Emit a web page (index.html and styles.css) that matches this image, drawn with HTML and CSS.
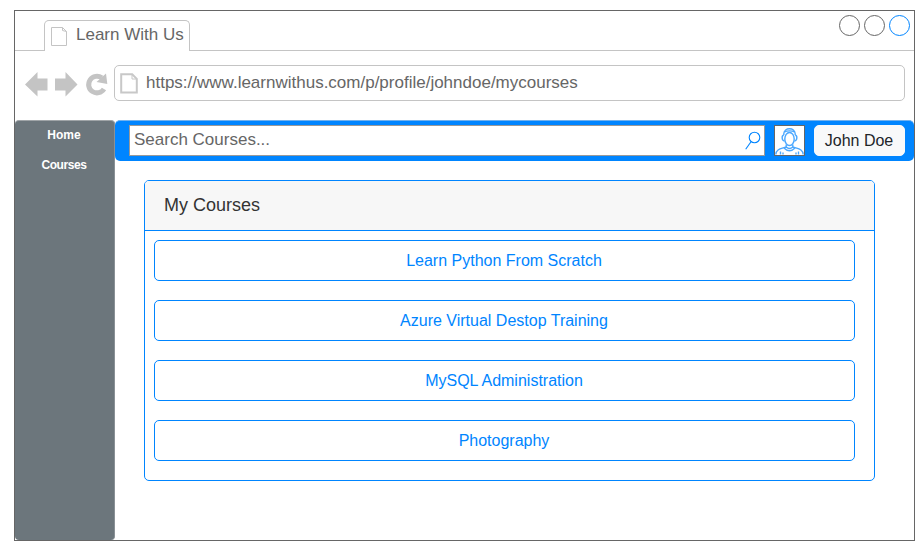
FILE: index.html
```html
<!DOCTYPE html>
<html lang="en">
<head>
<meta charset="utf-8">
<title>Learn With Us</title>
<link rel="stylesheet" href="styles.css">
</head>
<body>
<div class="window">
  <header class="tabs">
    <div class="tab">
      <svg class="tab-icon" width="17" height="20" viewBox="0 0 17 20"><path d="M.5 .5H11.5L15.5 4.5V18.5H.5ZM11.5 .5V3.5L15.5 4.5"/></svg>
      <span>Learn With Us</span>
    </div>
    <div class="controls"><i></i><i></i><i class="active"></i></div>
  </header>
  <div class="toolbar">
    <svg class="nav-icons" width="84" height="26" viewBox="0 0 84 26">
      <path d="M0 12.500L12.500 0V6.500H22.500V18.500H12.500V24.500Z"/>
      <path d="M52.500 12.500L40.500 0V6.500H30V18.500H40.500V24.500Z"/>
      <path class="reload" d="M79 17A8.300 8.300 0 1 1 76.800 5.800"/>
      <path d="M81 1.500L82.300 12L71.500 10Z"/>
    </svg>
    <div class="address">
      <svg class="page-icon" width="18" height="21" viewBox="0 0 18 21"><path d="M1.200 1.200H12.200L16.800 5.800V19.500H1.200Z"/><path class="fold" d="M12 1.500V6H16.500"/></svg>
      <span>https://www.learnwithus.com/p/profile/johndoe/mycourses</span>
    </div>
  </div>
  <div class="page">
    <nav class="sidebar">
      <a>Home</a>
      <a class="tight">Courses</a>
    </nav>
    <div class="content">
      <div class="navbar">
        <div class="search">
          <span>Search Courses...</span>
          <svg width="16" height="19" viewBox="0 0 16 19"><circle cx="9.5" cy="6.500" r="5.300"/><path d="M6 10.700L.7 18.300"/></svg>
        </div>
        <svg class="avatar" width="31" height="31" viewBox="0 0 31 31">
          <rect class="frame" x=".5" y=".5" width="30" height="30"/>
          <ellipse cx="15.500" cy="14" rx="4.700" ry="6.500"/>
          <path d="M9.800 10V8.800C10 2 21 2 21.200 8.800V10M10 7.200Q15.500 4.500 21 7.200M9.800 10C7.500 10.500 7.500 15.500 10.500 16M21.200 10C23.500 10.500 23.500 15.500 20.500 16M12.200 19.500V22Q15.500 25 18.800 22V19.500M12 22C7 23.800 2 24 1.800 29.500M19 22C24 23.800 29 24 29.200 29.500M10 23Q15.500 28.500 21 23M6.500 26.500V29.500M9 27.500V29.500M22 27.500V29.500M24.500 26.500V29.500"/>
        </svg>
        <button class="user">John Doe</button>
      </div>
      <section class="card">
        <h1>My Courses</h1>
        <div class="courses">
          <a>Learn Python From Scratch</a>
          <a>Azure Virtual Destop Training</a>
          <a>MySQL Administration</a>
          <a>Photography</a>
        </div>
      </section>
    </div>
  </div>
</div>
</body>
</html>
```
FILE: styles.css
```css
* { box-sizing: border-box; }
body {
  margin: 0;
  padding: 10px 0 0 14px;
  background: #fff;
  font-family: "Liberation Sans", Arial, sans-serif;
  overflow: hidden;
}
svg { display: block; flex: none; fill: none; }
.window {
  display: flex;
  flex-direction: column;
  width: 901px;
  height: 531px;
  border: 1px solid #666;
}
.tabs {
  display: flex;
  justify-content: space-between;
  height: 40px;
  flex: none;
  border-bottom: 1px solid #c4c4c4;
}
.tab {
  display: flex;
  width: 146px;
  height: 31px;
  margin: 9px 0 0 29px;
  padding: 6px 0 0 6px;
  gap: 8px;
  border: 1px solid #c4c4c4;
  border-bottom: 0;
  border-radius: 5px 5px 0 0;
  background: #fff;
  color: #666;
  font-size: 17px;
  line-height: 20px;
  white-space: nowrap;
}
.tab span { margin-top: -2px; }
.tab-icon { stroke: #c4c4c4; }
.controls { display: flex; gap: 4px; padding: 4px 4px 0 0; }
.controls i {
  width: 21px;
  height: 21px;
  border: 1px solid #666;
  border-radius: 50%;
}
.controls .active { border-color: #0085ff; }
.toolbar {
  display: flex;
  height: 69px;
  flex: none;
  padding: 14px 9px 0 10px;
}
.nav-icons { margin: 7px 5px 0 0; fill: #c4c4c4; }
.nav-icons .reload { fill: none; stroke: #c4c4c4; stroke-width: 5; }
.address {
  display: flex;
  flex: 1;
  height: 36px;
  padding: 7px 5px 0;
  gap: 8px;
  border: 1px solid #c4c4c4;
  border-radius: 5px;
  color: #666;
  font-size: 17px;
  line-height: 20px;
}
.page-icon { stroke: #c8c8c8; stroke-width: 2; }
.page-icon .fold { stroke-width: 1; }
.page { display: flex; flex: 1; }
.sidebar {
  width: 100px;
  padding-top: 5px;
  border-top: 1px solid #a0a5a8;
  border-right: 1px solid #8a9196;
  border-radius: 4px;
  background: #6c767c;
  text-align: center;
}
.sidebar a {
  display: block;
  height: 30px;
  color: #fff;
  font-size: 12px;
  font-weight: bold;
  line-height: 18px;
}
.sidebar a { padding-right: 1px; }
.sidebar .tight { letter-spacing: -0.4px; }
.content { flex: 1; }
.navbar {
  display: flex;
  height: 41px;
  padding: 4px 9px 0 14px;
  border-top: 1px solid #73b2ee;
  border-radius: 5px;
  background: #0085ff;
}
.search {
  display: flex;
  justify-content: space-between;
  width: 636px;
  height: 31px;
  padding: 5px 3px 0 4px;
  border: 1px solid #999;
  background: #fff;
  color: #666;
  font-size: 17px;
  line-height: 20px;
}
.search span { margin-top: -1px; }
.search svg { stroke: #0085ff; stroke-width: 1.1; }
.avatar { margin: 0 9px; stroke: #4aa7ff; stroke-width: 1.4; }
.avatar .frame { fill: #fff; stroke: #666; stroke-width: 1; }
.user {
  width: 91px;
  height: 31px;
  padding: 0 1px 0 0;
  border: 1px solid #f8f9fa;
  border-radius: 5px;
  background: #f8f9fa;
  color: #212529;
  font: 16px/28px "Liberation Sans", Arial, sans-serif;
}
.card {
  width: 731px;
  height: 301px;
  margin: 19px 0 0 29px;
  border: 1px solid #0085ff;
  border-radius: 5px;
  overflow: hidden;
}
.card h1 {
  height: 50px;
  margin: 0;
  padding-left: 19px;
  border-bottom: 1px solid #0085ff;
  background: #f7f7f7;
  color: #333;
  font-size: 18px;
  font-weight: normal;
  line-height: 48px;
}
.courses { display: grid; gap: 19px; padding: 9px 19px 0 9px; }
.courses a {
  height: 41px;
  padding-right: 1px;
  border: 1px solid #0085ff;
  border-radius: 5px;
  color: #0085ff;
  font-size: 16px;
  line-height: 39px;
  text-align: center;
}
```
